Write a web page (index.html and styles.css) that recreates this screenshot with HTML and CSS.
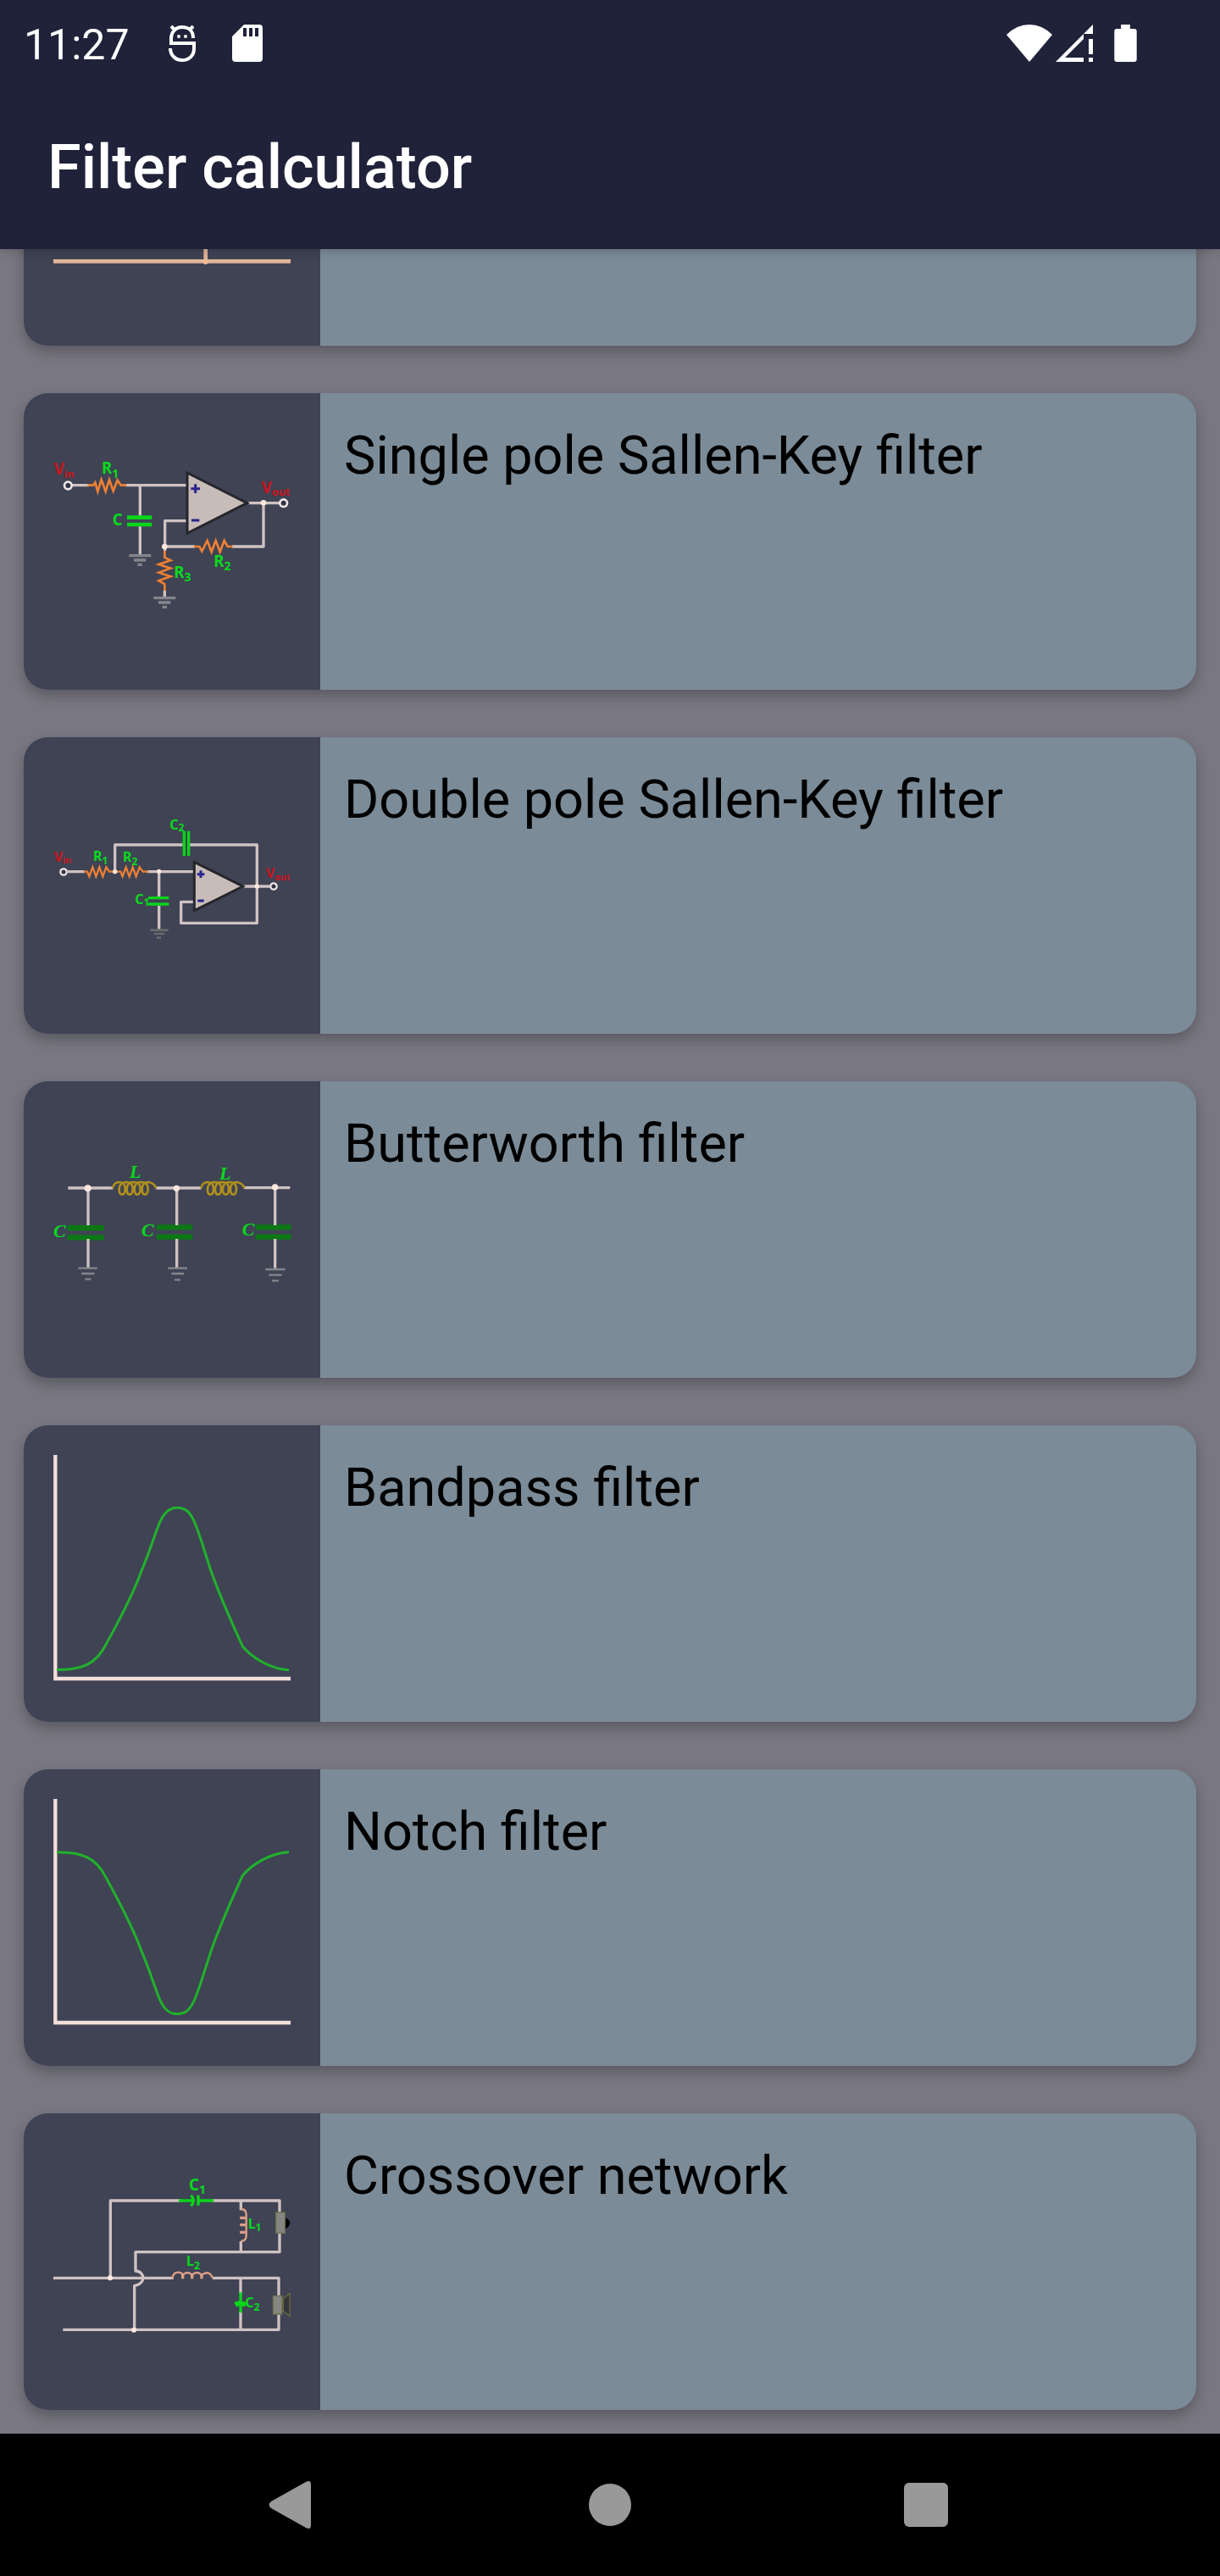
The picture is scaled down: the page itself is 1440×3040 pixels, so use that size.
FILE: index.html
```html
<!DOCTYPE html>
<html lang="en">
<head>
<meta charset="utf-8">
<meta name="viewport" content="width=device-width, initial-scale=1">
<title>Filter calculator</title>
<link rel="stylesheet" href="styles.css">
</head>
<body class="screen">
<header class="top">
  <div class="status">
    <time class="clock">11:27</time>
    <svg class="status-icon debug" viewBox="0 0 32 44" aria-hidden="true">
      <g fill="none" stroke="#fff" stroke-width="4"><path d="M29 16C29 7 23 3 16 3S3 8 3 17V22H30V28C30 37 24 42 16 42S2 36 2 28"/><path d="M7 6L3 2M25 6L29 2"/></g>
      <circle cx="12" cy="14" r="2" fill="#fff"/><circle cx="20" cy="14" r="2" fill="#fff"/>
    </svg>
    <svg class="status-icon card-icon" viewBox="0 0 36 44" aria-hidden="true"><path fill="#fff" fill-rule="evenodd" d="M14 0H32Q36 0 36 4V40Q36 44 32 44H4Q0 44 0 40V14ZM13 4V14H17V4ZM20 4V14H24V4ZM27 4V14H31V4Z"/></svg>
    <span class="spacer"></span>
    <svg class="status-icon wifi" viewBox="0 0 54 44" aria-hidden="true"><path fill="#fff" d="M27 44L0 12Q12 0 27 0T54 12Z"/></svg>
    <svg class="status-icon signal" viewBox="0 0 44 44" aria-hidden="true"><path fill="#fff" d="M44 0V11H33V44H0ZM11 39H33V17ZM39 17H44V35H39ZM39 39H44V44H39Z" fill-rule="evenodd"/></svg>
    <svg class="status-icon battery" viewBox="0 0 27 45" aria-hidden="true"><path fill="#fff" d="M8 0H19V5H24Q27 5 27 8V42Q27 45 24 45H3Q0 45 0 42V8Q0 5 3 5H8Z"/></svg>
  </div>
  <h1 class="title">Filter calculator</h1>
</header>

<main class="viewport">
  <ul class="list">
    <li><a class="card" href="#lowpass" aria-label="Filter">
      <span class="thumb"><svg viewBox="189 -561 840 840" class="diagram">
        <path class="peach" d="M189 85H1029M728 -200V90"/><circle cx="728" cy="87" r="9" fill="#f0bd97"/>
      </svg></span>
      <span class="name"></span>
    </a></li>

    <li><a class="card" href="#single-pole">
      <span class="thumb"><svg viewBox="129 -3 840 840" class="diagram">
        <path class="wire" d="M196 218H255M385 218H600M436 218V326M436 364V462M600 344H524V450M524 435H630M762 435H873V281M820 281H930M523 590V612"/>
        <circle class="port" cx="181" cy="219" r="13"/><circle class="port" cx="944" cy="281" r="13"/>
        <circle class="node" cx="873" cy="280" r="10"/><circle class="node" cx="523" cy="435" r="10"/>
        <path class="resistor" d="M250 218H270L277 208L286 240L299 198L314 240L327 198L341 238L356 200L368 218H388M626 435H646L655 452L674 414L689 454L704 414L719 454L734 414L746 435H764M523 450V474L544 484L502 498L544 512L502 527L544 541L502 556L523 568V592"/>
        <path class="cap" d="M390 332H478M390 357H478"/>
        <path class="ground" d="M397 467H475M414 483H457M427 499H443M484 617H562M501 633H544M515 649H531"/>
        <path class="amp" d="M603 174L815 281L603 388Z"/>
        <path class="sign" d="M616 230H648M632 214V246M618 342H646"/>
        <g class="label red"><text x="131" y="181">V<tspan class="sub" dy="12">in</tspan></text><text x="866" y="246">V<tspan class="sub" dy="10">out</tspan></text></g>
        <g class="label"><text x="300" y="176">R<tspan class="sub" dy="15">1</tspan></text><text x="338" y="359">C</text><text x="697" y="508">R<tspan class="sub" dy="12">2</tspan></text><text x="556" y="546">R<tspan class="sub" dy="12">3</tspan></text></g>
      </svg></span>
      <span class="name">Single pole Sallen-Key filter</span>
    </a></li>

    <li><a class="card" href="#double-pole">
      <span class="thumb"><svg viewBox="129 -45 840 840" class="diagram">
        <path class="wire" d="M179 326H240M347 326V231H587M612 231H850V508H581V433H626M460 326H626M503 326V414M503 446V530M803 378H896"/>
        <circle class="port small" cx="165" cy="327" r="11"/><circle class="port small" cx="909" cy="378" r="11"/>
        <path class="resistor thin" d="M236 326H249L256 343L268 310L280 343L292 310L304 343L316 310L327 326H367L374 343L386 310L398 343L410 310L422 343L434 310L446 326H466"/>
        <circle class="node" cx="347" cy="326" r="8"/><circle class="node" cx="503" cy="325" r="8"/><circle class="node" cx="850" cy="378" r="8"/>
        <path class="cap thin" d="M592 182V270M608 182V270M465 419H538M465 441H538"/>
        <path class="ground dim" d="M472 533H536M485 546H522M495 560H510"/>
        <path class="amp" d="M628 292L800 378L628 464Z"/>
        <path class="sign" d="M638 335H664M651 322V348M640 429H662"/>
        <g class="label red compact"><text x="131" y="292">V<tspan class="sub" dy="6">in</tspan></text><text x="882" y="347">V<tspan class="sub" dy="10">out</tspan></text></g>
        <g class="label compact"><text x="270" y="288">R<tspan class="sub" dy="11">1</tspan></text><text x="375" y="290">R<tspan class="sub" dy="14">2</tspan></text><text x="418" y="441">C<tspan class="sub" dy="5">1</tspan></text><text x="541" y="176">C<tspan class="sub" dy="7">2</tspan></text></g>
      </svg></span>
      <span class="name">Double pole Sallen-Key filter</span>
    </a></li>

    <li><a class="card" href="#butterworth">
      <span class="thumb"><svg viewBox="129 -57 840 840" class="diagram">
        <path class="wire" d="M181 216H340M493 216H652M804 215H967"/>
        <path class="cap thick" d="M179 357H308M179 391H308M495 355H622M495 389H622M845 355H971M845 389H971"/>
        <path class="wire" d="M252 216V348M252 396V500M566 216V348M566 396V500M914 216V348M914 396V500"/>
        <circle class="node" cx="251" cy="217" r="12"/><circle class="node" cx="565" cy="217" r="11"/><circle class="node" cx="914" cy="213" r="11"/>
        <g id="coil" class="coil"><path d="M338 217Q345 195 362 195Q383 196 383 218Q383 239 372 239Q361 239 362 218Q365 195 388 195Q410 196 410 218Q410 239 399 239Q388 239 389 218Q391 195 414 195Q437 196 437 218Q437 239 426 239Q415 239 416 218Q418 195 440 195Q464 196 464 218Q464 239 453 239Q442 239 443 218Q445 195 465 195Q486 198 493 217"/></g>
        <use href="#coil" x="313"/>
        <path class="ground fine" d="M217 500H285M228 519H274M241 539H262M535 500H603M547 519H591M558 541H579M880 504H950M892 524H938M903 544H927"/>
        <g class="label serif"><text x="129" y="389">C</text><text x="441" y="387">C</text><text x="797" y="383">C</text><text x="399" y="181">L</text><text x="717" y="185">L</text></g>
      </svg></span>
      <span class="name">Butterworth filter</span>
    </a></li>

    <li><a class="card" href="#bandpass">
      <span class="thumb"><svg viewBox="129 141 840 840" class="diagram">
        <path class="axis" d="M136 141V933H969"/>
        <path class="curve" d="M141 901C235 904 281 877 313 816C353 743 405 650 440 554C475 472 487 423 507 377C526 335 548 328 567 328C589 328 607 334 625 371C646 415 662 477 687 551C720 646 758 728 799 819C833 860 901 900 963 902"/>
      </svg></span>
      <span class="name">Bandpass filter</span>
    </a></li>

    <li><a class="card" href="#notch">
      <span class="thumb"><svg viewBox="129 129 840 840" class="diagram">
        <path class="axis" d="M136 129V921H969"/>
        <path class="curve" d="M141 318C235 315 281 342 313 403C353 476 405 569 440 665C475 747 487 796 507 842C526 884 548 890 567 890C589 890 607 885 625 848C646 804 662 742 687 668C720 573 758 491 799 400C833 359 901 319 963 317"/>
      </svg></span>
      <span class="name">Notch filter</span>
    </a></li>

    <li><a class="card" href="#crossover">
      <span class="thumb"><svg viewBox="129 -33 840 840" class="diagram">
        <path class="wire" d="M129 445H554M331 445V171H580M690 171H930V214M793 171V205M793 315V353M930 286V353H420V420C456 422 456 468 416 472V628M163 628H927V570M693 445H927V510M792 445V500M792 565V628"/>
        <circle class="node" cx="330" cy="445" r="9"/><circle class="node" cx="414" cy="629" r="9"/>
        <path class="cap thin" d="M573 171H625M642 171H697M642 152V188M616 152Q634 171 616 190M792 496V568M771 536Q792 524 812 538M776 545Q792 528 807 545"/>
        <path class="salmon" d="M793 201Q812 202 812 220V295Q812 314 793 315M790 232H812M790 257H812M790 283H812M550 449Q552 425 571 425Q583 425 587 434Q604 418 620 434Q637 418 654 434Q680 415 693 445"/>
        <path class="salmon heavy" d="M790 232H808M790 257H808M790 283H808M587 430V448M620 430V448M654 430V448"/>
        <path fill="#000" d="M949 231Q967 238 967 250Q967 263 949 272Z"/>
        <path fill="#858681" stroke="#6b7050" stroke-width="4" d="M917 213H949V286H917ZM907 508H939V573H907Z"/>
        <path fill="#32363a" stroke="#686b3b" stroke-width="4" d="M943 518L966 500V580L943 562Z"/>
        <g class="label"><text x="609" y="134">C<tspan class="sub" dy="12">1</tspan></text></g>
        <g class="label compact"><text x="818" y="270">L<tspan class="sub" dy="10">1</tspan></text><text x="600" y="403">L<tspan class="sub" dy="11">2</tspan></text><text x="808" y="549">C<tspan class="sub" dy="12">2</tspan></text></g>
      </svg></span>
      <span class="name">Crossover network</span>
    </a></li>
  </ul>
</main>

<nav class="nav" aria-label="System navigation">
  <button class="nav-button" type="button" aria-label="Back"><svg class="nav-icon" viewBox="0 0 56 56"><path d="M2 24L43 1Q49 -2 49 4V52Q49 58 43 55L2 32Q-3 28 2 24Z"/></svg></button>
  <button class="nav-button" type="button" aria-label="Home"><svg class="nav-icon" viewBox="0 0 56 56"><circle cx="28" cy="28" r="25"/></svg></button>
  <button class="nav-button" type="button" aria-label="Recent apps"><svg class="nav-icon" viewBox="0 0 56 56"><rect x="1" y="2" width="52" height="52" rx="6"/></svg></button>
</nav>
</body>
</html>
```
FILE: styles.css
```css
* { box-sizing: border-box; }

.screen {
  margin: 0;
  height: 100vh;
  display: flex;
  flex-direction: column;
  background: #797882;
  font-family: Roboto, "Liberation Sans", sans-serif;
}

.top {
  position: relative;
  z-index: 1;
  flex: none;
  background: #20223a;
  color: #fff;
  box-shadow: 0 2px 12px rgba(0, 0, 0, .2);
}

.status {
  display: flex;
  align-items: center;
  height: 102px;
  padding: 0 98px 0 28px;
}

.clock {
  padding-top: 4px;
  margin-right: 46px;
  font-size: 50px;
  line-height: 56px;
}

.status-icon { flex: none; height: 44px; }
.debug { width: 32px; margin-right: 43px; }
.card-icon { width: 36px; }
.spacer { flex: 1; }
.wifi { width: 54px; margin-right: 4px; }
.signal { width: 44px; margin-right: 25px; }
.battery { width: 27px; }

.title {
  margin: 0;
  padding: 54px 56px;
  font-size: 72px;
  font-weight: 500;
  line-height: 84px;
}

/* The list rests at its end, so the first rows slide under the header. */
.viewport {
  flex: 1;
  min-height: 0;
  overflow: hidden;
  display: flex;
  flex-direction: column;
  justify-content: flex-end;
}

.list {
  display: flex;
  flex-direction: column;
  gap: 56px;
  margin: 0;
  padding: 28px;
  list-style: none;
}

.card {
  display: flex;
  border-radius: 28px;
  overflow: hidden;
  background: #7b8b97;
  color: #000;
  text-decoration: none;
  box-shadow: 0 7px 16px rgba(0, 0, 0, .26);
}

.thumb {
  flex: none;
  width: 350px;
  height: 350px;
  padding: 35px;
  background: #3f4354;
}

.diagram { display: block; width: 100%; height: 100%; overflow: visible; }

.name {
  flex: 1;
  padding: 32px 28px;
  font-size: 63px;
  line-height: 84px;
}

.diagram path { fill: none; }
.diagram path[fill] { fill: revert-layer; }
.diagram .wire { stroke: #cfc2c2; stroke-width: 10; stroke-linejoin: round; }
.diagram .peach { stroke: #e3b69a; stroke-width: 14; }
.diagram .axis { stroke: #f4dfda; stroke-width: 13; }
.diagram .curve { stroke: #20b22b; stroke-width: 9; }
.diagram .resistor { stroke: #ee8033; stroke-width: 8; }
.diagram .coil path { stroke: #ae8f1c; stroke-width: 8; }
.diagram .salmon { stroke: #dda087; stroke-width: 7; }
.diagram .salmon.heavy { stroke-width: 10; }
.diagram .cap { stroke: #09d51a; stroke-width: 14; }
.diagram .cap.thin { stroke-width: 10; }
.diagram .cap.thick { stroke: #0c7814; stroke-width: 19; }
.diagram .resistor.thin { stroke-width: 7; }
.diagram .ground { stroke: #85868c; stroke-width: 10; }
.diagram .ground.dim { stroke: #6a6b6d; stroke-width: 8; }
.diagram .ground.fine { stroke-width: 7; }
.diagram .amp { fill: #c8bcb8; stroke: #25262b; stroke-width: 9; }
.diagram .sign { stroke: #29258d; stroke-width: 9; }
.diagram .port { fill: #303344; stroke: #eee5e6; stroke-width: 8; }
.diagram .port.small { stroke-width: 7; }
.diagram .node { fill: #ffe8dd; }

.label {
  fill: #08d91c;
  font-family: "Noto Sans", "Open Sans", sans-serif;
  font-size: 56px;
  font-weight: 700;
}
.label.red { fill: #c8141c; }
.label.compact { font-size: 48px; }
.label.serif {
  font-family: "Liberation Serif", serif;
  font-size: 66px;
  font-weight: 700;
  font-style: italic;
}
.sub { font-size: 42px; }
.red .sub { font-size: 38px; }
.compact .sub { font-size: 36px; }
.red.compact .sub { font-size: 32px; }

.nav {
  flex: none;
  display: flex;
  justify-content: center;
  height: 168px;
  background: #000;
}

.nav-button {
  width: 26%;
  padding: 0;
  border: 0;
  background: none;
  display: flex;
  align-items: center;
  justify-content: center;
}

.nav-icon { width: 56px; height: 56px; fill: #999; overflow: visible; }
```
